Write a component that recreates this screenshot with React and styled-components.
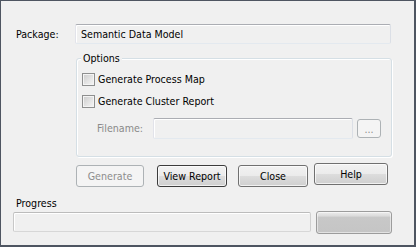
import React from "react";
import styled, { createGlobalStyle } from "styled-components";

const GlobalStyle = createGlobalStyle`
  html, body {
    margin: 0;
    padding: 0;
    background: #f0f0f0;
  }
  body {
    font-family: "DejaVu Sans Condensed", "Liberation Sans", sans-serif;
    font-size: 10.6px;
    color: #000;
  }
`;

const Window = styled.div`
  width: 416px;
  height: 247px;
  box-sizing: border-box;
  border-style: solid;
  border-color: #4e5561;
  border-width: 1px 2px 2px 1px;
  background: #f0f0f0;
  display: flex;
  flex-direction: column;
  overflow: hidden;
`;

const Row = styled.div`
  display: flex;
  align-items: center;
  margin-top: ${(p) => p.$top || 0}px;
  padding-left: ${(p) => p.$left || 0}px;
  gap: ${(p) => p.$gap || 0}px;
`;

const Label = styled.span`
  width: ${(p) => (p.$width ? `${p.$width}px` : "auto")};
  text-align: ${(p) => (p.$right ? "right" : "left")};
  color: ${(p) => (p.$disabled ? "#8a8a8a" : "#000")};
  line-height: 13px;
  white-space: nowrap;
`;

const TextBox = styled.div`
  width: ${(p) => p.$width}px;
  height: ${(p) => p.$height || 20}px;
  box-sizing: border-box;
  border: 1px solid;
  border-color: #abadb3 #dbdfe6 #e3e9ef #e2e3ea;
  border-radius: 2px;
  box-shadow: inset 1px 1px 0 #fff;
  background: #f0f0f0;
  display: flex;
  align-items: center;
  padding-left: 5px;
  margin-top: ${(p) => p.$top || 0}px;
`;

const Group = styled.div`
  position: relative;
  margin-top: 14px;
  margin-left: 75px;
  width: 316px;
  height: 99px;
  box-sizing: border-box;
  border: 1px solid #d5dfe5;
  border-radius: 3px;
  box-shadow: inset 1px 1px 0 #fff, 1px 1px 0 #fff;
  padding: 14px 0 0 5px;
  display: flex;
  flex-direction: column;
`;

const Legend = styled.span`
  position: absolute;
  top: -7px;
  left: 4px;
  padding: 0 2px;
  background: #f0f0f0;
  line-height: 13px;
`;

const CheckRow = styled.label`
  display: flex;
  align-items: center;
  gap: 3px;
  height: 13px;
  margin-top: ${(p) => p.$top || 0}px;
  line-height: 13px;
`;

const CheckBox = styled.span`
  width: 13px;
  height: 13px;
  box-sizing: border-box;
  border: 1px solid #8e8f8f;
  background: linear-gradient(135deg, #cbcbcb 0%, #e6e6e6 60%, #f6f6f6 100%);
  box-shadow: inset 0 0 0 1px #f4f4f4;
  flex-shrink: 0;
`;

const Button = styled.button`
  width: ${(p) => p.$width}px;
  height: ${(p) => p.$height || 22}px;
  margin-top: ${(p) => p.$top || 0}px;
  padding: 0;
  box-sizing: border-box;
  font: inherit;
  color: #000;
  border: 1px solid ${(p) => (p.$default ? "#3c3c3c" : "#707070")};
  border-radius: 3px;
  background: linear-gradient(#f2f2f2 0%, #ebebeb 50%, #dddddd 51%, #cfcfcf 100%);
  box-shadow: inset 0 0 0 1px rgba(255, 255, 255, 0.7);
  flex-shrink: 0;

  &:disabled {
    color: #8d8d8d;
    border-color: #adb2b5;
    background: #f4f4f4;
    box-shadow: none;
  }
`;

const ProgressBar = styled.div`
  width: 298px;
  height: 20px;
  margin-top: 1px;
  box-sizing: border-box;
  border: 1px solid;
  border-color: #bcbcbc #d0d0d0 #d7d7d7 #c8c8c8;
  border-radius: 2px;
  box-shadow: inset 1px 1px 0 #fff;
  background: #f0f0f0;
`;

const GrayButton = styled.div`
  width: 76px;
  height: 23px;
  box-sizing: border-box;
  border: 1px solid #9c9c9c;
  border-radius: 3px;
  background: linear-gradient(#ececec 0%, #dcdcdc 18%, #c8c8c8 26%, #c5c5c5 100%);
  box-shadow: inset 0 0 0 1px rgba(255, 255, 255, 0.5);
`;

export default function App() {
  return (
    <>
      <GlobalStyle />
      <Window>
        <Row $top={23} $left={15}>
          <Label $width={59}>Package:</Label>
          <TextBox $width={316}>Semantic Data Model</TextBox>
        </Row>

        <Group>
          <Legend>Options</Legend>
          <CheckRow>
            <CheckBox />
            Generate Process Map
          </CheckRow>
          <CheckRow $top={9}>
            <CheckBox />
            Generate Cluster Report
          </CheckRow>
          <Row $top={10}>
            <Label $width={61} $right $disabled>
              Filename:
            </Label>
            <TextBox $width={200} $height={21} style={{ marginLeft: 10 }} />
            <Button $width={24} $height={19} disabled style={{ marginLeft: 4 }}>
              ...
            </Button>
          </Row>
        </Group>

        <Row $left={75} style={{ alignItems: "flex-start", marginTop: 6 }}>
          <Button $width={68} $top={2} disabled>
            Generate
          </Button>
          <Button $width={70} $top={2} $default style={{ marginLeft: 13 }}>
            View Report
          </Button>
          <Button $width={70} $top={2} style={{ marginLeft: 11 }}>
            Close
          </Button>
          <Button $width={74} style={{ marginLeft: 6 }}>
            Help
          </Button>
        </Row>

        <Row $top={10} $left={15}>
          <Label>Progress</Label>
        </Row>
        <Row $top={1} $left={12} $gap={5} style={{ alignItems: "flex-start" }}>
          <ProgressBar />
          <GrayButton />
        </Row>
      </Window>
    </>
  );
}
